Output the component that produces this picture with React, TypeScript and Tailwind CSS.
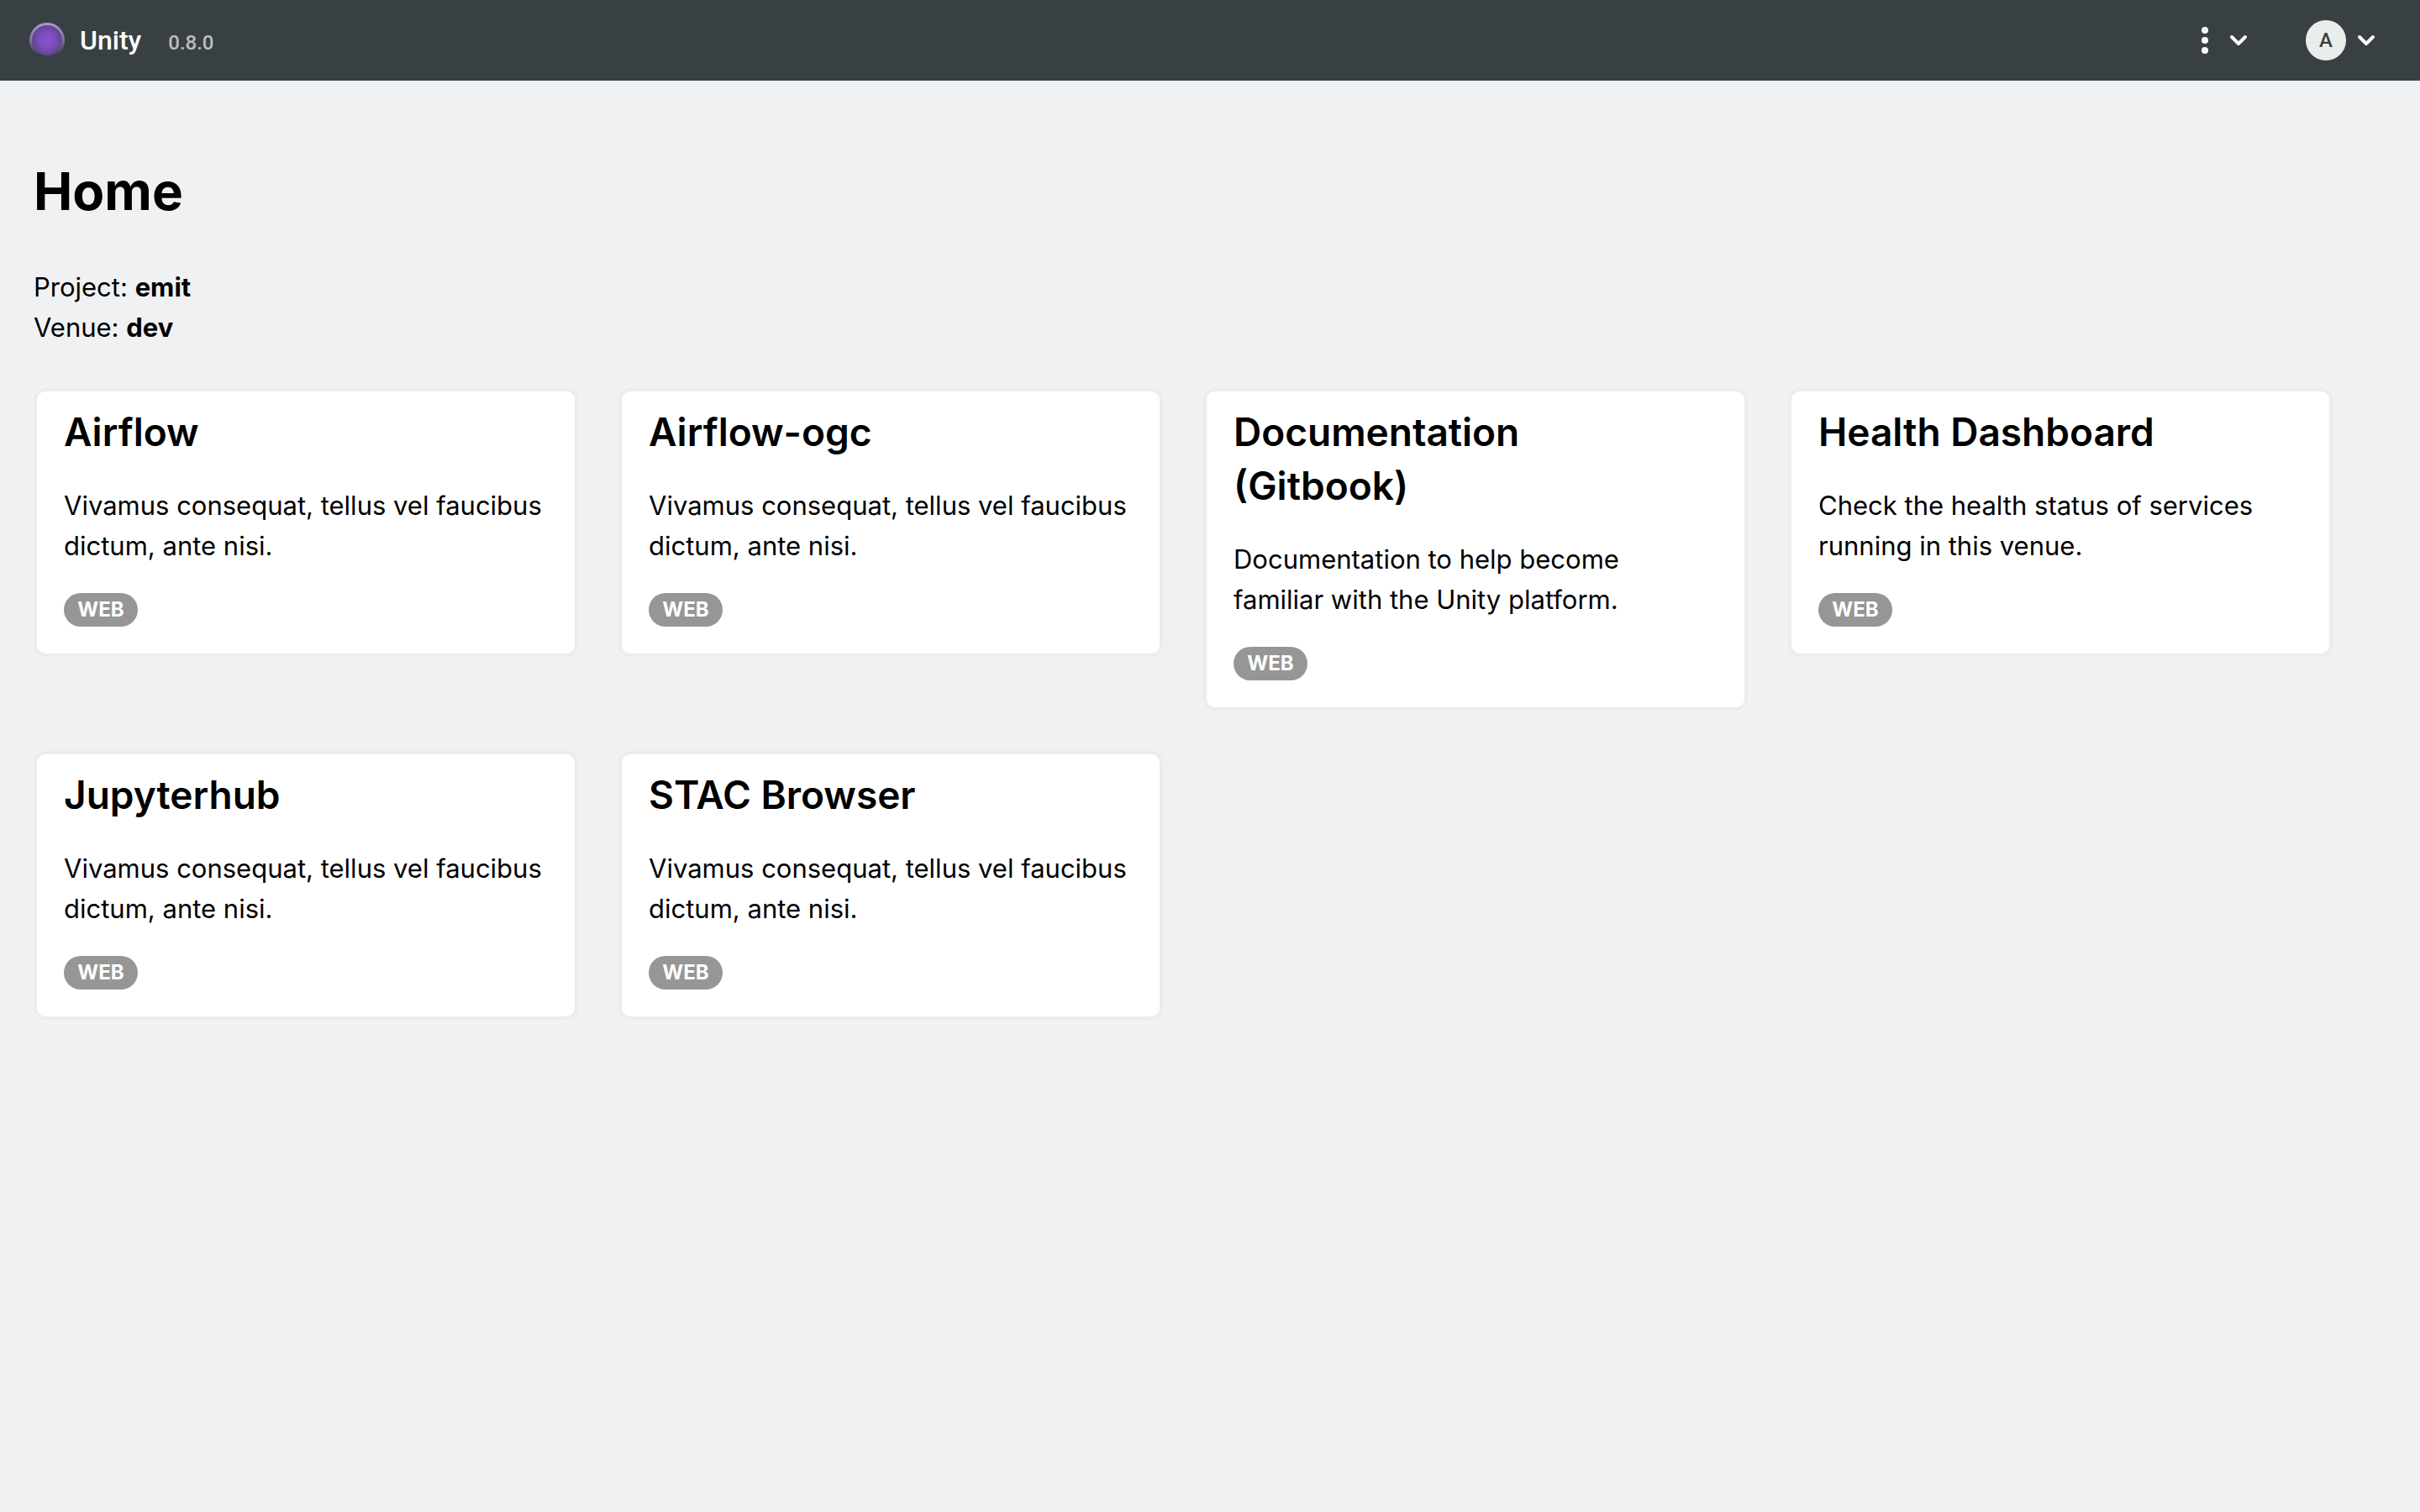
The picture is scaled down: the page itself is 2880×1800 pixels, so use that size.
import React from "react";

type Service = { title: string; text: string };

const lorem = "Vivamus consequat, tellus vel faucibus dictum, ante nisi.";

const services: Service[] = [
  { title: "Airflow", text: lorem },
  { title: "Airflow-ogc", text: lorem },
  { title: "Documentation\n(Gitbook)", text: "Documentation to help become\nfamiliar with the Unity platform." },
  { title: "Health Dashboard", text: "Check the health status of services running in this venue." },
  { title: "Jupyterhub", text: lorem },
  { title: "STAC Browser", text: lorem },
];

function Chevron() {
  return (
    <svg className="h-8 w-8" viewBox="0 0 32 32" fill="none" stroke="#fafafa" strokeWidth="4" strokeLinecap="round" strokeLinejoin="round" aria-hidden="true">
      <path d="M8 12l8 8 8-8" />
    </svg>
  );
}

function Logo() {
  return (
    <svg className="h-[42px] w-[42px]" viewBox="0 0 42 42" aria-hidden="true">
      <defs>
        <linearGradient id="rim" x1="0" y1="0" x2="0" y2="1">
          <stop offset="0" stopColor="#b794dc" />
          <stop offset="0.5" stopColor="#80739a" />
          <stop offset="0.9" stopColor="#394044" />
        </linearGradient>
        <radialGradient id="core">
          <stop offset="0" stopColor="#8a4fd0" />
          <stop offset="0.5" stopColor="#7d4fbd" />
          <stop offset="1" stopColor="#5f4691" />
        </radialGradient>
      </defs>
      <circle cx="21" cy="21" r="21" fill="url(#rim)" />
      <circle cx="21" cy="21" r="18" fill="url(#core)" />
    </svg>
  );
}

function Card({ title, text }: Service) {
  return (
    <a href="#" className="block rounded-[14px] border-4 border-[#ebedec] bg-white px-8 pt-4 pb-8 whitespace-pre-line">
      <h2 className="text-[46px] leading-[64px] font-semibold">{title}</h2>
      <p className="mt-8 text-[31px] leading-[48px]">{text}</p>
      <span className="mt-8 flex h-10 w-[88px] items-center justify-center rounded-full bg-[#969696] text-[24px] font-bold text-white">WEB</span>
    </a>
  );
}

export default function App() {
  return (
    <div className="min-h-screen bg-[#f0f1f3] font-['Inter',sans-serif] text-black">
      <header className="flex h-24 items-center bg-[#394044] pr-12 pl-[35px]">
        <Logo />
        <div className="ml-[18px] flex items-baseline gap-8 font-['Roboto',sans-serif]">
          <span className="text-[32px] font-medium text-white">Unity</span>
          <span className="text-[24px] font-medium text-[#bcbec0]">0.8.0</span>
        </div>
        <div className="ml-auto flex items-center gap-16">
          <button type="button" aria-label="More options" className="flex items-center gap-5">
            <svg className="h-8 w-2" viewBox="0 0 8 32" fill="#fafafa" aria-hidden="true">
              <circle cx="4" cy="4" r="4" />
              <circle cx="4" cy="16" r="4" />
              <circle cx="4" cy="28" r="4" />
            </svg>
            <Chevron />
          </button>
          <button type="button" aria-label="Account" className="flex items-center gap-2">
            <span className="flex h-12 w-12 items-center justify-center rounded-full bg-[#ebedec] font-['Roboto',sans-serif] text-[24px] font-medium text-[#394044]">A</span>
            <Chevron />
          </button>
        </div>
      </header>
      <main className="px-10 pt-24">
        <h1 className="text-[62px] leading-[72px] font-bold">Home</h1>
        <p className="mt-[54px] text-[31px] leading-[48px]">
          Project: <strong>emit</strong>
          <br />
          Venue: <strong>dev</strong>
        </p>
        <div className="mt-12 mr-16 grid grid-cols-4 items-start gap-12">
          {services.map((s) => (
            <Card key={s.title} {...s} />
          ))}
        </div>
      </main>
    </div>
  );
}
